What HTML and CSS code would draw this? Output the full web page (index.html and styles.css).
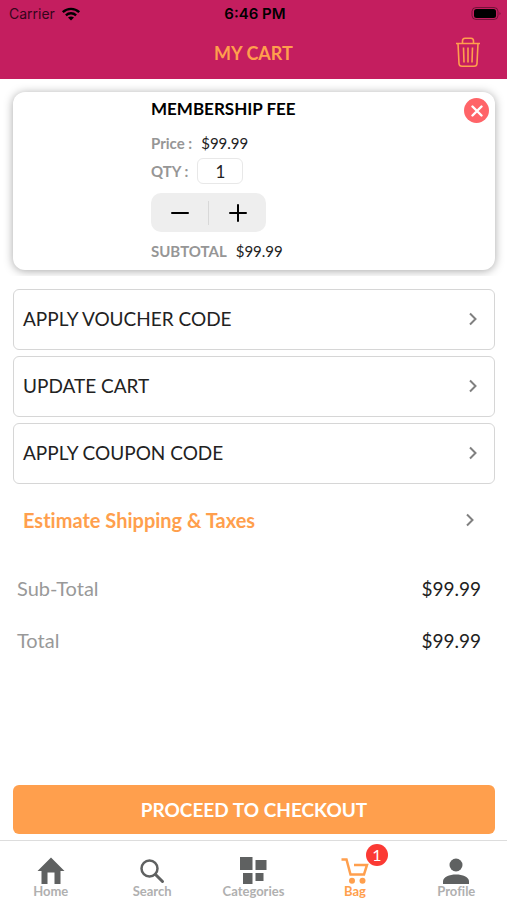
FILE: index.html
```html
<!DOCTYPE html>
<html lang="en">
<head>
<meta charset="utf-8">
<meta name="viewport" content="width=device-width, initial-scale=1">
<title>My Cart</title>
<link rel="stylesheet" href="styles.css">
</head>
<body>
<div class="app">
  <header class="header">
    <div class="status">
      <div class="status-left">
        <span>Carrier</span>
        <svg width="20" height="14" viewBox="0 0 20 14" aria-hidden="true">
          <g fill="none" stroke="currentColor" stroke-width="2.4">
            <path d="M1.8 5.2C6.4 .7 13.6 .7 18.2 5.2"/>
            <path d="M4.9 8.3C7.8 5.6 12.2 5.6 15.1 8.3"/>
          </g>
          <path d="M10 13.6 7 10.6Q10 8.2 13 10.6Z" fill="currentColor"/>
        </svg>
      </div>
      <span class="status-time">6:46 PM</span>
      <svg class="battery" width="30" height="14" viewBox="0 0 30 14" aria-hidden="true">
        <rect x="1" y=".5" width="26" height="12" rx="4" fill="none" stroke="#000" stroke-opacity=".4"/>
        <rect x="3" y="2" width="22" height="9" rx="2.5"/>
        <path d="M28.500 5v3q1-.5 1-1.500T28.500 5Z" fill-opacity=".4"/>
      </svg>
    </div>
    <div class="nav">
      <h1 class="nav-title">MY CART</h1>
      <button class="icon-button" type="button" aria-label="Empty cart">
        <svg width="26" height="32" viewBox="0 0 26 32" fill="none" stroke="currentColor" stroke-width="1.6" stroke-linejoin="round" aria-hidden="true">
          <path d="M1 6.500H25M7.500 6.500V4Q7.500 1.300 10 1.300H16Q18.500 1.300 18.500 4V6.500"/>
          <path d="M3 6.500 4 26.500Q4.200 29.300 7 29.300H19Q21.800 29.300 22 26.500L23 6.500"/>
          <path d="M8.500 10.500 9 25.500M13 10.500V25.500M17.500 10.500 17 25.500"/>
        </svg>
      </button>
    </div>
  </header>

  <main class="main">
    <div class="card-wrap">
      <section class="card">
        <div class="card-image"></div>
        <div class="card-info">
          <h2 class="product">MEMBERSHIP FEE</h2>
          <div class="line"><span class="label">Price :</span><span class="price">$99.99</span></div>
          <div class="line line-qty"><label class="label" for="qty">QTY :</label><input class="qty" id="qty" type="text" value="1"></div>
          <div class="stepper">
            <button class="step" type="button" aria-label="Decrease quantity"><svg width="18" height="18" viewBox="0 0 18 18" aria-hidden="true"><path d="M1 9H17" stroke="currentColor" stroke-width="2" stroke-linecap="round"/></svg></button>
            <button class="step" type="button" aria-label="Increase quantity"><svg width="18" height="18" viewBox="0 0 18 18" aria-hidden="true"><path d="M1 9H17M9 1V17" stroke="currentColor" stroke-width="2" stroke-linecap="round"/></svg></button>
          </div>
          <div class="line"><span class="label">SUBTOTAL</span><span class="price">$99.99</span></div>
        </div>
        <button class="remove" type="button" aria-label="Remove item"><svg width="12" height="12" viewBox="0 0 12 12" aria-hidden="true"><path d="M1.500 1.500 10.500 10.500M10.500 1.500 1.500 10.500" stroke="currentColor" stroke-width="2.400" stroke-linecap="round"/></svg></button>
      </section>
    </div>

    <div class="options">
      <button class="option" type="button"><span>APPLY VOUCHER CODE</span><svg class="chevron" width="8" height="14" viewBox="0 0 8 14" aria-hidden="true"><path d="M1 1.500 6.500 7 1 12.500"/></svg></button>
      <button class="option" type="button"><span>UPDATE CART</span><svg class="chevron" width="8" height="14" viewBox="0 0 8 14" aria-hidden="true"><path d="M1 1.500 6.500 7 1 12.500"/></svg></button>
      <button class="option" type="button"><span>APPLY COUPON CODE</span><svg class="chevron" width="8" height="14" viewBox="0 0 8 14" aria-hidden="true"><path d="M1 1.500 6.500 7 1 12.500"/></svg></button>
      <button class="option option-plain" type="button"><span>Estimate Shipping &amp; Taxes</span><svg class="chevron" width="8" height="14" viewBox="0 0 8 14" aria-hidden="true"><path d="M1 1.500 6.500 7 1 12.500"/></svg></button>
    </div>

    <dl class="totals">
      <div class="total"><dt>Sub-Total</dt><dd>$99.99</dd></div>
      <div class="total"><dt>Total</dt><dd>$99.99</dd></div>
    </dl>
    <button class="checkout" type="button">PROCEED TO CHECKOUT</button>
  </main>

  <nav class="tabs">
    <a class="tab" href="#home">
      <svg width="28" height="28" viewBox="0 0 28 28" fill="currentColor" aria-hidden="true"><path d="M14 .5 27.500 14H23.500V27H17.500V15.500H10.500V27H4.500V14H.5Z"/></svg>
      <span>Home</span>
    </a>
    <a class="tab" href="#search">
      <svg width="28" height="28" viewBox="0 0 28 28" fill="none" stroke="currentColor" aria-hidden="true"><circle cx="11.500" cy="11.500" r="8" stroke-width="2.500"/><path d="M17.500 17.500 24.500 24.500" stroke-width="3" stroke-linecap="round"/></svg>
      <span>Search</span>
    </a>
    <a class="tab" href="#categories">
      <svg width="28" height="28" viewBox="0 0 28 28" fill="currentColor" aria-hidden="true"><path d="M1 0H13.500V13H1ZM16.500 3H27.500V13H16.500ZM4 16H13.500V27H4ZM16.500 16H24.500V24H16.500Z"/></svg>
      <span>Categories</span>
    </a>
    <a class="tab tab-active" href="#bag">
      <svg width="28" height="28" viewBox="0 0 28 28" fill="none" stroke="currentColor" stroke-width="2.500" aria-hidden="true"><path d="M.5 2.500H5.500L9.500 17.500H23L26 8H13"/><circle cx="11" cy="23.700" r="3" fill="currentColor" stroke="none"/><circle cx="21.500" cy="23.700" r="3" fill="currentColor" stroke="none"/></svg>
      <span>Bag</span>
      <span class="badge">1</span>
    </a>
    <a class="tab" href="#profile">
      <svg width="28" height="28" viewBox="0 0 28 28" fill="currentColor" aria-hidden="true"><circle cx="14" cy="8" r="6.500"/><path d="M1 27V24.500C1 15.200 27 15.200 27 24.500V27Z"/></svg>
      <span>Profile</span>
    </a>
  </nav>
</div>
</body>
</html>
```
FILE: styles.css
```css
* { box-sizing: border-box; }

body {
  margin: 0;
  background: #fff;
  color: #222;
  font-family: Lato, "Liberation Sans", sans-serif;
  font-variant-ligatures: none;
}

h1, h2, dl, dd { margin: 0; }

button {
  padding: 0;
  border: 0;
  background: none;
  color: inherit;
  font: inherit;
  cursor: pointer;
}

svg { display: block; }

.app {
  display: flex;
  flex-direction: column;
  min-height: 100vh;
}

.header {
  background: #c41e5f;
  color: #ff9f4d;
}

.status {
  display: grid;
  grid-template-columns: 1fr auto 1fr;
  align-items: center;
  height: 27px;
  padding: 0 6px 0 9px;
  color: #000;
  font: 14px/20px Inter, sans-serif;
}

.status-left {
  display: flex;
  align-items: center;
  gap: 6px;
  color: #35051b;
}

.status-left svg { color: #000; }

.status-time {
  font-size: 15px;
  font-weight: 600;
}

.battery { justify-self: end; }

.nav {
  display: grid;
  grid-template-columns: 1fr auto 1fr;
  align-items: center;
  height: 52px;
  padding: 0 26px;
}

.nav-title {
  grid-column: 2;
  font-size: 18px;
  font-weight: 700;
}

.icon-button { justify-self: end; }

.main {
  display: flex;
  flex: 1;
  flex-direction: column;
  padding-bottom: 6px;
}

.card-wrap {
  padding: 13px 12px 6px 13px;
  overflow: hidden;
}

.card {
  display: flex;
  align-items: flex-start;
  height: 178px;
  padding: 6px 6px 5px 12px;
  border-radius: 12px;
  background: #fff;
  box-shadow: 0 1px 10px rgba(0, 0, 0, 0.35);
}

.card-image {
  flex: none;
  width: 126px;
}

.card-info {
  flex: 1;
}

.product {
  margin-bottom: 12px;
  color: #000;
  font-size: 17px;
  font-weight: 700;
  line-height: 22px;
}

.line {
  display: flex;
  align-items: center;
  gap: 9px;
  height: 22px;
}

.line-qty {
  height: 26px;
  margin: 4px 0 9px;
}

.label {
  color: #969696;
  font-size: 15px;
  font-weight: 700;
}

.price {
  font-size: 15px;
}

.qty {
  width: 46px;
  height: 26px;
  padding: 0;
  border: 1px solid #e8e8e8;
  border-radius: 6px;
  background: #fff;
  color: #222;
  font: inherit;
  font-size: 17px;
  text-align: center;
}

.stepper {
  display: flex;
  align-items: center;
  width: 115px;
  height: 39px;
  margin-bottom: 8px;
  border-radius: 10px;
  background: #eee;
  color: #000;
}

.step {
  display: grid;
  flex: 1;
  height: 24px;
  place-items: center;
}

.step + .step { border-left: 1px solid #d8d8d8; }

.remove {
  display: grid;
  flex: none;
  width: 25px;
  height: 25px;
  place-items: center;
  border-radius: 50%;
  background: #ff6468;
  color: #fff;
}

.options {
  display: flex;
  flex-direction: column;
  gap: 6px;
  padding: 13px 12px 0 13px;
}

.option {
  display: flex;
  align-items: center;
  justify-content: space-between;
  height: 61px;
  padding: 0 17px 2px 9px;
  border: 1px solid #d6d6d6;
  border-radius: 6px;
  font-size: 19px;
  text-align: left;
}

.option-plain {
  padding-right: 20px;
  border-color: transparent;
  color: #ff9f4d;
  font-size: 20px;
  font-weight: 700;
}

.chevron {
  fill: none;
  stroke: #808080;
  stroke-width: 2;
}

.totals {
  padding: 11px 26px 0 17px;
}

.total {
  display: flex;
  align-items: center;
  justify-content: space-between;
  height: 52px;
  font-size: 20px;
}

.total dt { color: #999; }

.total dd { font-size: 19px; }

.checkout {
  height: 49px;
  margin: auto 12px 0 13px;
  border-radius: 6px;
  background: #ff9f4d;
  color: #fff;
  font-size: 19px;
  font-weight: 700;
}

.tabs {
  display: grid;
  grid-template-columns: repeat(5, 1fr);
  height: 60px;
  border-top: 1px solid #ddd;
}

.tab {
  position: relative;
  display: flex;
  flex-direction: column;
  align-items: center;
  padding-top: 16px;
  color: #5f6161;
  font-size: 13px;
  font-weight: 700;
  line-height: 13px;
  text-decoration: none;
}

.tab span { color: #b0b0b0; }

.tab-active,
.tab-active span { color: #ff9f4d; }

.tab .badge {
  position: absolute;
  top: 3px;
  left: calc(50% + 11px);
  width: 22px;
  height: 22px;
  border-radius: 50%;
  background: #fb3a34;
  color: #fff;
  font-size: 16px;
  font-weight: 400;
  line-height: 22px;
  text-align: center;
}
```
